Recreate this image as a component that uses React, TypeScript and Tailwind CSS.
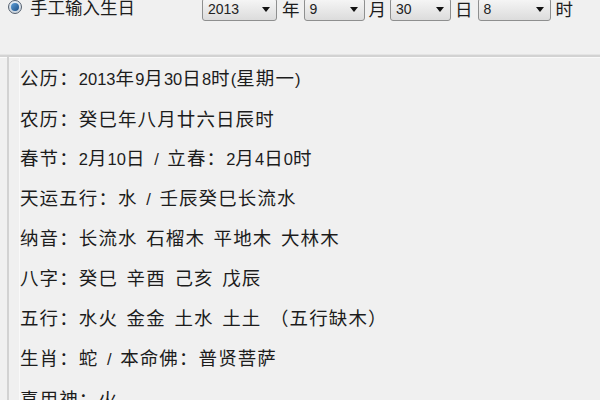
import React from "react";

const cjk = { fontFamily: "'Noto Sans CJK SC', 'Liberation Sans', sans-serif" };
const latin = { fontFamily: "'Liberation Sans', 'Noto Sans CJK SC', sans-serif" };

function Select({ value, width }: { value: string; width: string }) {
  return (
    <div
      className={`relative flex h-[23px] items-center rounded-[3px] border border-[#8e8f8f] bg-gradient-to-b from-[#f6f6f6] via-[#e9e9e9] to-[#dcdcdc] pl-[5px] ${width}`}
    >
      <span
        className="text-[14px] leading-none text-[#222]"
        style={{ fontFamily: "'Liberation Sans', sans-serif" }}
      >
        {value}
      </span>
      <svg
        className="absolute right-[6px] top-[8px]"
        width="8"
        height="5"
        viewBox="0 0 8 5"
      >
        <path d="M0 0 H8 L4 5 Z" fill="#111" />
      </svg>
    </div>
  );
}

function Line({ text }: { text: string }) {
  const parts = text.match(/[\x00-\x7F]+|[^\x00-\x7F]+/g) || [];
  return (
    <div className="flex h-[40px] items-center">
      <span className="whitespace-pre leading-none">
        {parts.map((p, i) =>
          /^[\x00-\x7F]+$/.test(p) ? (
            <span key={i} className="text-[16.5px] [word-spacing:4px]" style={latin}>
              {p}
            </span>
          ) : (
            <span key={i} className="text-[18.5px] tracking-[1.1px]" style={cjk}>
              {p}
            </span>
          )
        )}
      </span>
    </div>
  );
}

const lines = [
  "公历：2013年9月30日8时(星期一)",
  "农历：癸巳年八月廿六日辰时",
  "春节：2月10日 / 立春：2月4日0时",
  "天运五行：水 / 壬辰癸巳长流水",
  "纳音：长流水 石榴木 平地木 大林木",
  "八字：癸巳 辛酉 己亥 戊辰",
  "五行：水火 金金 土水 土土 （五行缺木）",
  "生肖：蛇 / 本命佛：普贤菩萨",
  "喜用神：火",
];

export default function App() {
  return (
    <div
      className="relative h-[400px] w-[600px] overflow-hidden bg-[#f0f0f0] text-[#1c1c1c]"
      style={cjk}
    >
      {/* top row */}
      <div className="-mt-[3px] flex h-[24px] items-center">
        <div className="ml-[8px] flex h-[14px] w-[14px] -translate-y-[2px] items-center justify-center rounded-full border border-[#55606e] bg-gradient-to-b from-[#e6eef6] to-[#c9d3dd]">
          <div className="h-[8px] w-[8px] rounded-full bg-gradient-to-br from-[#5fa0d8] to-[#1d4f86]" />
        </div>
        <span className="ml-[8px] -translate-y-[2px] text-[17.5px] leading-none">手工输入生日</span>
        <div className="ml-[67px] flex items-center">
          <Select value="2013" width="w-[75px]" />
          <span className="ml-[5px] mr-[4px] text-[17.5px] leading-none">年</span>
          <Select value="9" width="w-[61px]" />
          <span className="ml-[4px] mr-[4px] text-[17.5px] leading-none">月</span>
          <Select value="30" width="w-[61px]" />
          <span className="ml-[4px] mr-[5px] text-[17.5px] leading-none">日</span>
          <Select value="8" width="w-[73px]" />
          <span className="ml-[5px] text-[17.5px] leading-none">时</span>
        </div>
      </div>

      {/* separator groove */}
      <div className="mt-[33px] h-[1px] w-full bg-[#e4e4e4]" />
      <div className="h-[2px] w-full bg-[#d4d4d4]" />
      <div className="h-[1px] w-full bg-[#fbfbfb]" />

      {/* panel */}
      <div className="ml-[7px] -mt-[3px] border-l-[2px] border-t-[2px] border-[#d2d2d2] pl-[10px]">
        <div className="border-l border-t border-[#f9f9f9]">
          {lines.map((l) => (
            <Line key={l} text={l} />
          ))}
        </div>
      </div>
    </div>
  );
}
